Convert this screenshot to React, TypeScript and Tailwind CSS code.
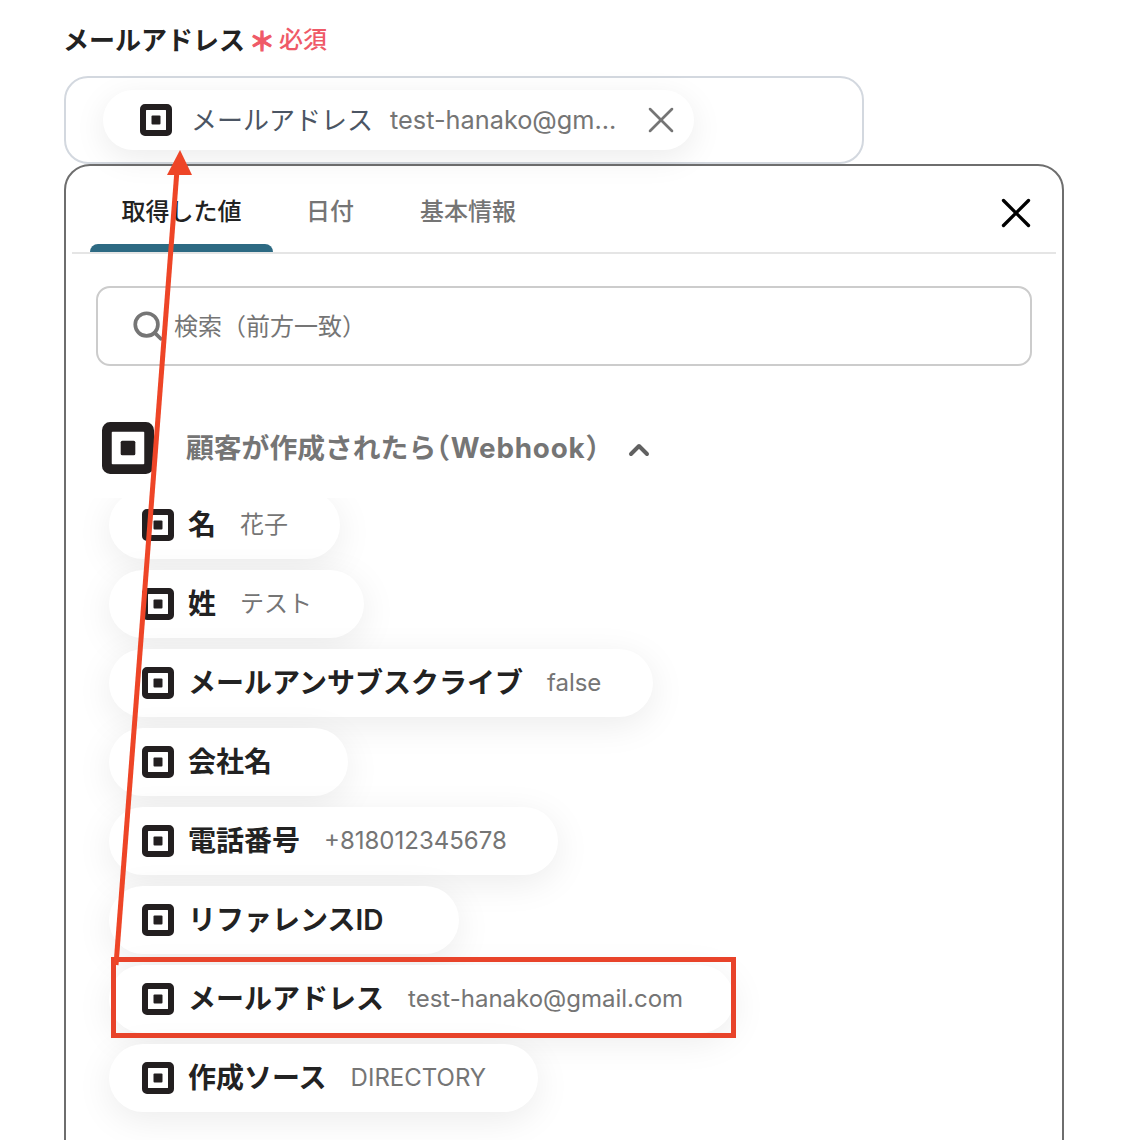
import { Search, X, ChevronUp } from "lucide-react";

const rows = [
  { name: "名", value: "花子", w: "w-[231px]", gap: "ml-[24px]" },
  { name: "姓", value: "テスト", w: "w-[255px]", gap: "ml-[24px]" },
  { name: "メールアンサブスクライブ", value: "false", w: "w-[544px]", gap: "ml-[24px]" },
  { name: "会社名", value: "", w: "w-[239px]", gap: "" },
  { name: "電話番号", value: "+818012345678", w: "w-[449px]", gap: "ml-[24px]" },
  { name: "リファレンスID", value: "", w: "w-[350px]", gap: "" },
  { name: "メールアドレス", value: "test-hanako@gmail.com", w: "w-[625px]", gap: "ml-[24px]" },
  { name: "作成ソース", value: "DIRECTORY", w: "w-[429px]", gap: "ml-[24px]" },
];

function SquareIcon({ className }: { className: string }) {
  return (
    <svg viewBox="0 0 32 32" className={className}>
      <path
        fillRule="evenodd"
        fill="#231f20"
        d="M5 0h22a5 5 0 0 1 5 5v22a5 5 0 0 1-5 5H5a5 5 0 0 1-5-5V5a5 5 0 0 1 5-5zM6.5 6a.5.5 0 0 0-.5.5v19a.5.5 0 0 0 .5.5h19a.5.5 0 0 0 .5-.5v-19a.5.5 0 0 0-.5-.5z"
      />
      <rect x="11.5" y="11.5" width="9" height="9" rx="1" fill="#231f20" />
    </svg>
  );
}

export default function App() {
  return (
    <div
      className="relative h-[1140px] overflow-hidden bg-white pl-[64px] pt-[22px] text-[#222]"
      style={{ fontFamily: 'Inter, "Noto Sans CJK JP", sans-serif' }}
    >
      <div className="flex h-[36px] items-center">
        <span className="-ml-[1px] text-[26px] font-semibold">メールアドレス</span>
        <span className="ml-[4px] mt-[4px] text-[26px] font-bold leading-none text-[#ef5a67] [-webkit-text-stroke:1px_#ef5a67]">＊</span>
        <span className="ml-[4px] text-[24px] font-medium text-[#ef5a67]">必須</span>
      </div>

      <div className="mt-[18px] flex h-[88px] w-[800px] items-start rounded-[24px] border-2 border-[#d3d8df] bg-white pl-[37px] pt-[12px]">
        <div className="flex h-[60px] w-[591px] items-center rounded-full bg-white pl-[37px] shadow-[0_8px_32px_rgba(0,0,0,0.08)]">
          <SquareIcon className="h-[32px] w-[32px]" />
          <span className="ml-[19px] text-[26px] text-[#4b5563]">メールアドレス</span>
          <span className="ml-[17px] whitespace-nowrap text-[25.3px] text-[#757575]">test-hanako@gm...</span>
          <X className="ml-[23px] h-[44px] w-[44px] shrink-0 text-[#757575]" strokeWidth={1.4} />
        </div>
      </div>

      <div className="h-[1000px] w-[1000px] rounded-t-[26px] border-2 border-[#6e6e6e] bg-white">
        <div className="mx-[6px] flex h-[88px] items-start border-b-2 border-[#e5e5e5] pl-[18px]">
          <div className="flex h-[86px] w-[183px] flex-col items-center justify-between">
            <span className="mt-[28px] text-[24px] font-medium">取得した値</span>
            <div className="h-[8px] w-full rounded-t-[8px] bg-[#2d6a83]" />
          </div>
          <span className="mt-[28px] px-[33px] text-[24px] font-medium text-[#757575]">日付</span>
          <span className="mt-[28px] px-[33px] text-[24px] font-medium text-[#757575]">基本情報</span>
          <X className="ml-auto mr-[15px] mt-[22px] h-[50px] w-[50px] text-black" strokeWidth={1.6} />
        </div>

        <div className="mx-[30px] mt-[32px] flex h-[80px] w-[936px] items-center rounded-[14px] border-2 border-[#cccccc] pl-[33px]">
          <Search className="h-[34px] w-[34px] text-[#757575]" strokeWidth={2.6} />
          <span className="ml-[9px] mt-[2px] text-[24px] text-[#757575]">検索（前方一致）</span>
        </div>

        <div className="ml-[36px] mt-[56px] flex h-[52px] items-center">
          <SquareIcon className="h-[52px] w-[52px]" />
          <span className="ml-[32px] mt-[2px] whitespace-nowrap text-[27.8px] font-bold text-[#757575]">
            顧客が作成されたら<span className="-ml-[14px] tracking-[0.8px]">（Webhook）</span>
          </span>
          <ChevronUp className="ml-[9px] mt-[4px] h-[32px] w-[32px] text-[#616161]" strokeWidth={3} />
        </div>

        <div className="mt-[24px] h-[660px] overflow-hidden pl-[43px] pr-[20px]">
          <div className="-mt-[7px] flex flex-col gap-[11px]">
            {rows.map((row) => (
              <div
                key={row.name}
                className={`flex h-[68px] shrink-0 items-center rounded-full bg-white pl-[33px] shadow-[0_8px_36px_rgba(0,0,0,0.08)] ${row.w}`}
              >
                <SquareIcon className="h-[32px] w-[32px] shrink-0" />
                <span className="ml-[14px] whitespace-nowrap text-[28px] font-semibold">{row.name}</span>
                {row.value && (
                  <span className={`whitespace-nowrap text-[24px] text-[#757575] ${row.gap}`}>{row.value}</span>
                )}
              </div>
            ))}
          </div>
        </div>
      </div>

      <div className="absolute left-[111px] top-[957px] h-[81px] w-[625px] border-[5px] border-[#e8432a]" />
      <svg className="pointer-events-none absolute left-0 top-0 h-[1140px] w-[1124px]" viewBox="0 0 1124 1140">
        <line x1="116" y1="965" x2="177" y2="170" stroke="#ee4527" strokeWidth="5" />
        <polygon points="180,150 167,175 192,175" fill="#ee4527" />
      </svg>
    </div>
  );
}
